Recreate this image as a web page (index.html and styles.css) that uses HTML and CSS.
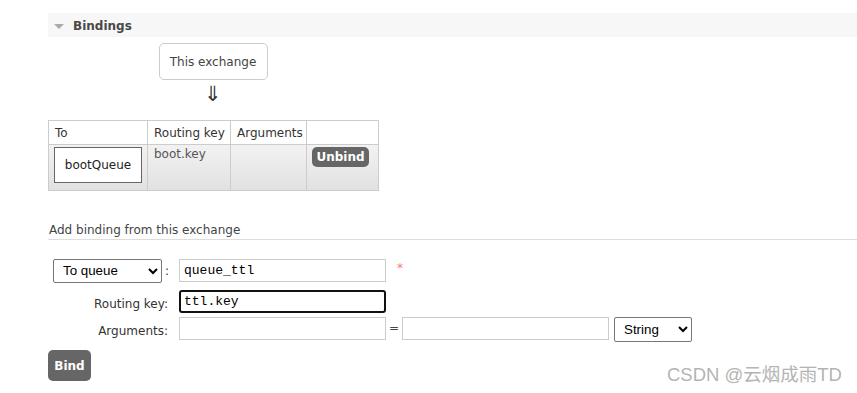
FILE: index.html
```html
<!DOCTYPE html>
<html lang="en">

<head>
    <meta charset="UTF-8">
    <meta name="viewport" content="width=device-width, initial-scale=1.0">
    <title>Exchange bindings</title>
    <link rel="stylesheet" href="styles.css">
</head>

<body>
    <div class="page">
        <!-- Bindings section header -->
        <div class="section-header">
            <span class="toggle"></span>
            <span class="section-title">Bindings</span>
        </div>

        <div class="bindings">
            <div class="flow">
                <div class="exchange-box">This exchange</div>
                <div class="flow-arrow">&#8659;</div>
            </div>

            <table class="binding-table">
                <colgroup>
                    <col class="col-to">
                    <col class="col-key">
                    <col class="col-args">
                    <col class="col-action">
                </colgroup>
                <thead>
                    <tr>
                        <th>To</th>
                        <th>Routing key</th>
                        <th>Arguments</th>
                        <th></th>
                    </tr>
                </thead>
                <tbody>
                    <tr>
                        <td><span class="queue-box">bootQueue</span></td>
                        <td class="key-cell">boot.key</td>
                        <td></td>
                        <td class="action-cell"><button class="btn btn-small">Unbind</button></td>
                    </tr>
                </tbody>
            </table>
        </div>

        <!-- Add binding form -->
        <h3 class="form-title">Add binding from this exchange</h3>

        <form class="binding-form">
            <div class="form-row row-dest">
                <div class="form-label">
                    <select class="select select-dest">
                        <option>To queue</option>
                        <option>To exchange</option>
                    </select>
                    <span class="colon">:</span>
                </div>
                <input class="text-input mono" type="text" value="queue_ttl">
                <span class="required">*</span>
            </div>
            <div class="form-row">
                <label class="form-label">Routing key:</label>
                <input class="text-input mono focused" type="text" value="ttl.key">
            </div>
            <div class="form-row row-args">
                <label class="form-label">Arguments:</label>
                <input class="text-input" type="text">
                <span class="equals">=</span>
                <input class="text-input" type="text">
                <select class="select select-type">
                    <option>String</option>
                    <option>Number</option>
                    <option>Boolean</option>
                </select>
            </div>
            <button class="btn btn-bind" type="button">Bind</button>
        </form>
    </div>

    <div class="watermark">CSDN @云烟成雨TD</div>
</body>

</html>
```

FILE: styles.css
```css
* {
    margin: 0;
    padding: 0;
    box-sizing: border-box;
}

body {
    font-family: "DejaVu Sans", Verdana, sans-serif;
    font-size: 12px;
    color: #444;
    background: #fff;
    overflow: hidden;
}

.page {
    padding: 13px 0 0 48px;
}

/* 區塊標題 */
.section-header {
    display: flex;
    align-items: center;
    height: 24px;
    background: #f7f7f7;
    padding: 2px 0 0 6px;
}

.toggle {
    width: 0;
    height: 0;
    border-left: 5.5px solid transparent;
    border-right: 5.5px solid transparent;
    border-top: 5px solid #aaa;
    margin-right: 9px;
}

.section-title {
    font-size: 12px;
    font-weight: bold;
    color: #484848;
}

.bindings {
    width: 330px;
    display: flex;
    flex-direction: column;
}

.flow {
    display: flex;
    flex-direction: column;
    align-items: center;
    padding-top: 6px;
}

.exchange-box {
    width: 109px;
    height: 37px;
    border: 1px solid #ccc;
    border-radius: 5px;
    display: flex;
    align-items: center;
    justify-content: center;
    color: #444;
}

.flow-arrow {
    height: 40px;
    padding-top: 4px;
    font-size: 21px;
    line-height: 20px;
    color: #333;
    margin-left: -1px;
}

/* 綁定表格 */
.binding-table {
    border-collapse: collapse;
    table-layout: fixed;
    width: 330px;
}

.col-to {
    width: 99px;
}

.col-key {
    width: 83px;
}

.col-args {
    width: 76px;
}

.col-action {
    width: 72px;
}

.binding-table th,
.binding-table td {
    border: 1px solid #ccc;
    text-align: left;
    font-weight: normal;
    white-space: nowrap;
}

.binding-table th {
    height: 24px;
    padding: 0 6px;
    color: #333;
}

.binding-table tbody tr {
    background: linear-gradient(#f2f2f2, #e1e1e1);
}

.binding-table td {
    height: 46px;
    vertical-align: top;
    padding: 2px 6px;
}

.queue-box {
    display: flex;
    align-items: center;
    justify-content: center;
    width: 88px;
    height: 36px;
    margin-left: -1px;
    background: #fff;
    border: 1px solid #666;
    color: #222;
}

.key-cell {
    color: #555;
}

.btn {
    background: #666;
    color: #fff;
    font-family: "DejaVu Sans", Verdana, sans-serif;
    font-weight: bold;
    font-size: 12px;
    border: none;
    border-radius: 5px;
}

.btn-small {
    width: 57px;
    height: 20px;
    margin-left: -1px;
}

/* 新增綁定表單 */
.form-title {
    margin-top: 30px;
    padding: 2px 0 0 1px;
    font-size: 12px;
    font-weight: normal;
    color: #444;
    height: 19px;
    border-bottom: 1px solid #ddd;
}

.binding-form {
    padding-top: 19px;
}

.form-row {
    display: flex;
    align-items: center;
    height: 23px;
    margin-bottom: 4px;
}

.row-dest {
    margin-bottom: 8px;
}

.row-args {
    height: 25px;
    align-items: flex-start;
    margin-bottom: 8px;
}

.form-label {
    width: 122px;
    display: flex;
    justify-content: flex-end;
    align-items: center;
    padding-right: 2px;
    margin-right: 9px;
    color: #333;
}

label.form-label {
    height: 23px;
    padding-top: 5px;
    align-items: center;
}

.select {
    height: 24px;
    border: 1px solid #767676;
    border-radius: 2px;
    font-family: "Liberation Sans", Arial, sans-serif;
    font-size: 13.33px;
    color: #000;
    background: #fff;
    padding-left: 5px;
}

.select-dest {
    width: 110px;
    margin-left: 5px;
}

.colon {
    margin-left: 3px;
    width: 3px;
}

.select-type {
    width: 78px;
    margin-left: 5px;
    height: 25px;
}

.text-input {
    width: 207px;
    height: 23px;
    border: 1px solid #ccc;
    padding: 0 4px;
    font-size: 12px;
    color: #000;
    background: #fff;
}

.mono {
    font-family: "Liberation Mono", "Courier New", monospace;
    font-size: 13px;
}

.focused {
    border: 2px solid #111;
    border-radius: 3px;
    outline: none;
    padding: 0 3px;
}

.required {
    color: #f77;
    margin-left: 11px;
    margin-top: -6px;
}

.equals {
    width: 16px;
    text-align: center;
    line-height: 23px;
}

.btn-bind {
    width: 43px;
    height: 31px;
}

/* 浮水印 */
.watermark {
    position: absolute;
    right: 15px;
    bottom: 7px;
    font-family: "Liberation Sans", "Noto Sans CJK SC", sans-serif;
    font-size: 18.5px;
    color: #b4b4b4;
}
```
